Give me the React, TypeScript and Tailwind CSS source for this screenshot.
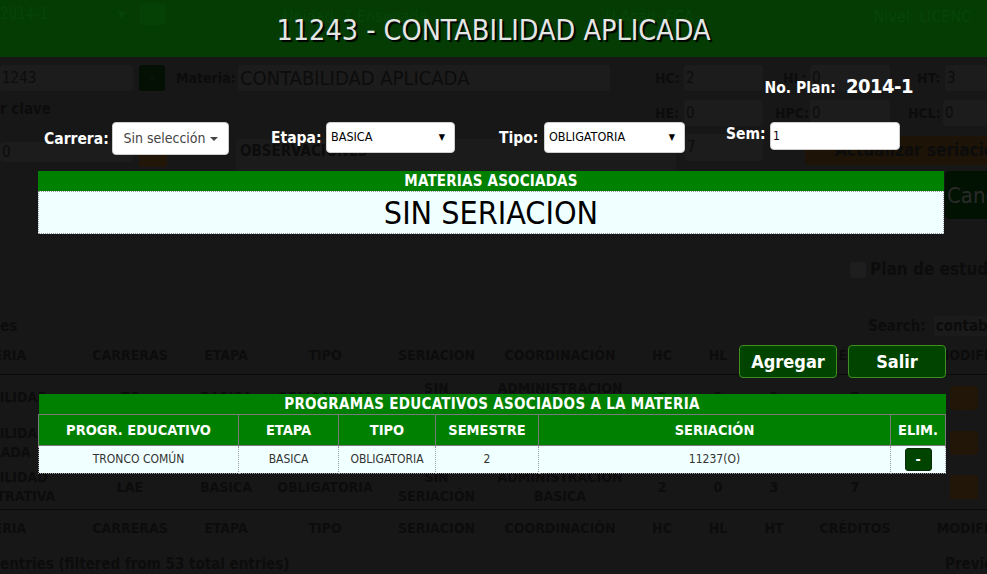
import React from "react";

const FONT =
  "font-['DejaVu_Sans_Condensed','DejaVu_Sans',sans-serif] [font-stretch:condensed]";

const G = "text-[#0c0c0c]"; // ghost text colour

function GInput({ className = "", children }: { className?: string; children?: React.ReactNode }) {
  return (
    <div className={`flex items-center overflow-hidden whitespace-nowrap rounded-[3px] bg-[#1c1c1c] pl-[2px] text-[15px] ${G} ${className}`}>
      {children}
    </div>
  );
}

const cols = [140, 130, 62, 136, 87, 160, 44, 68, 44, 118, 126];

function GRow({ cells, h, line = false, pb = 0 }: { cells: React.ReactNode[]; h: number; line?: boolean; pb?: number }) {
  return (
    <div
      className={`flex font-bold ${line ? "border-b border-[#0a0a0a]" : ""}`}
      style={{ height: h, paddingBottom: pb }}
    >
      {cells.map((c, i) => (
        <div
          key={i}
          className="flex shrink-0 items-center justify-center text-center text-[14px] leading-[19px]"
          style={{ width: cols[i] }}
        >
          {c}
        </div>
      ))}
    </div>
  );
}

function Edit() {
  return <div className="h-[24px] w-[28px] rounded-[3px] bg-[#211607]" />;
}

function Background() {
  const head = ["MATERIA", "CARRERAS", "ETAPA", "TIPO", "SERIACION", "COORDINACIÓN", "HC", "HL", "HT", "CRÉDITOS", "MODIFICAR"];
  const edit = <div className="flex w-full justify-start pl-[36px]"><Edit /></div>;
  return (
    <div className={`flex h-[574px] w-[987px] flex-col bg-[#171717] ${G}`}>
      {/* header band */}
      <div className="flex h-[57px] shrink-0 items-start whitespace-nowrap bg-[#043c04] pt-[3px] text-[15px] text-[#074507]">
        <div className="flex h-[22px] w-[133px] items-center justify-between pr-[8px]">
          <span>2014-1</span>
          <span className="text-[10px]">▼</span>
        </div>
        <div className="ml-[7px] h-[22px] w-[26px] rounded-[3px] bg-[#054105]" />
        <div className="ml-[117px] pt-[2px] text-[16px]">Unidad: 1 Ensenada</div>
        <div className="ml-[178px] pt-[2px] text-[16px]">U.Acad: FCA</div>
        <div className="ml-[180px] pt-[2px] text-[16px]">Nivel: LICENC</div>
      </div>

      {/* row 1 */}
      <div className="mt-[8px] flex h-[26px] items-stretch whitespace-nowrap">
        <GInput className="w-[133px]">1243</GInput>
        <div className="ml-[6px] flex w-[26px] items-center justify-center rounded-[3px] bg-[#031003] text-[#0c1a0c]">-</div>
        <div className="ml-[11px] flex w-[56px] items-center text-[14px] font-bold">Materia:</div>
        <GInput className="ml-[6px] w-[372px] text-[20px]">CONTABILIDAD APLICADA</GInput>
        <div className="ml-[45px] flex w-[29px] items-center text-[14px] font-bold">HC:</div>
        <GInput className="w-[79px]">2</GInput>
        <div className="ml-[20px] flex w-[27px] items-center text-[14px] font-bold">HL:</div>
        <GInput className="w-[80px]">0</GInput>
        <div className="ml-[27px] flex w-[28px] items-center text-[14px] font-bold">HT:</div>
        <GInput className="w-[42px]">3</GInput>
      </div>

      {/* row 2 */}
      <div className="mt-[9px] flex h-[26px] items-stretch whitespace-nowrap">
        <div className="w-[655px] text-[15px] font-bold leading-[18px]">r clave</div>
        <div className="flex w-[29px] items-center text-[14px] font-bold">HE:</div>
        <GInput className="w-[79px]">0</GInput>
        <div className="ml-[12px] flex w-[35px] items-center text-[14px] font-bold">HPC:</div>
        <GInput className="w-[80px]">0</GInput>
        <div className="ml-[18px] flex w-[35px] items-center text-[14px] font-bold">HCL:</div>
        <GInput className="w-[44px]">0</GInput>
      </div>

      {/* row 3 */}
      <div className="mt-[8px] flex h-[33px] items-start whitespace-nowrap">
        <GInput className="mt-[8px] h-[20px] w-[133px]">0</GInput>
        <div className="ml-[6px] mt-[5px] h-[28px] w-[28px] rounded-[3px] bg-[#211607]" />
        <div className="ml-[69px] mt-[5px] h-[40px] w-[440px] rounded-[3px] bg-[#1b1b1b] pl-[4px] pt-[1px] text-[15px] font-bold">
          OBSERVACIONES
        </div>
        <GInput className="ml-[9px] h-[27px] w-[78px]">7</GInput>
        <div className="ml-[42px] mt-[2px] flex h-[29px] flex-1 items-center overflow-hidden rounded-l-[4px] bg-[#1d1307] pl-[30px] text-[17px] font-bold">
          Actualizar seriación
        </div>
      </div>

      {/* row 4 – cancel */}
      <div className="mt-[4px] flex h-[48px] justify-end">
        <div className="flex w-[42px] items-center overflow-hidden whitespace-nowrap rounded-l-[4px] bg-[#021202] pl-[2px] text-[22px] text-[#2a2a2a]">
          Cancelar
        </div>
      </div>

      {/* checkbox row */}
      <div className="mt-[42px] flex h-[18px] items-center whitespace-nowrap pl-[850px]">
        <div className="h-[16px] w-[16px] shrink-0 rounded-[2px] bg-[#1e1e1e]" />
        <div className="ml-[4px] text-[17px] font-bold">Plan de estudios</div>
      </div>

      {/* search row */}
      <div className="mt-[36px] flex h-[22px] items-center whitespace-nowrap">
        <div className="w-[868px] text-[15px] font-bold">es</div>
        <div className="text-[15px] font-bold">Search:</div>
        <div className="ml-[8px] flex h-[20px] flex-1 items-center overflow-hidden bg-[#1b1b1b] pl-[2px] text-[15px] font-bold">
          contabilidad
        </div>
      </div>

      {/* ghost table */}
      <div className="-ml-[75px] mt-[4px] flex flex-col">
        <GRow h={34} pb={4} line cells={head} />
        <GRow
          h={45}
          cells={["CONTABILIDAD", "TC", "BASICA", "OBLIGATORIA", <span>SIN<br />SERIACIÓN</span>, <span>ADMINISTRACION<br />BASICA</span>, "2", "0", "3", "7", edit]}
        />
        <GRow
          h={45}
          cells={[<span>CONTABILIDAD<br />APLICADA</span>, "TC", "BASICA", "OBLIGATORIA", <span>SIN<br />SERIACIÓN</span>, <span>ADMINISTRACION<br />BASICA</span>, "2", "0", "3", "7", edit]}
        />
        <GRow
          h={45}
          line
          cells={[<span>CONTABILIDAD<br />ADMINISTRATIVA</span>, "LAE", "BASICA", "OBLIGATORIA", <span>SIN<br />SERIACIÓN</span>, <span>ADMINISTRACION<br />BASICA</span>, "2", "0", "3", "7", edit]}
        />
        <GRow h={36} cells={head} />
      </div>
      <div className="mt-[8px] flex h-[20px] items-center justify-between whitespace-nowrap text-[15px] font-bold">
        <span>entries (filtered from 53 total entries)</span>
        <span className="w-[42px] overflow-hidden">Previous</span>
      </div>
    </div>
  );
}

function Select({ w, h, label }: { w: number; h: number; label: string }) {
  return (
    <div
      className="flex shrink-0 items-center justify-between rounded-[4px] border border-[#cfcfcf] bg-white pl-[4px] pr-[9px] text-[12.5px] font-normal text-black"
      style={{ width: w, height: h }}
    >
      <span>{label}</span>
      <span className="text-[9px]">▼</span>
    </div>
  );
}

function Modal() {
  const th = "border border-[#7a7a7a] p-0 text-center text-[14.5px] font-bold leading-[16px] text-white";
  const td = "border border-dotted border-[#9a9a9a] p-0 text-center text-[12px] leading-[16px] text-[#333]";
  return (
    <div className="absolute inset-0 flex flex-col">
      {/* title */}
      <div className="flex h-[57px] items-center justify-center pt-[5px] text-[28.5px] leading-[34px] text-[#e6e6e6] [text-shadow:2px_2px_1px_#000]">
        11243 - CONTABILIDAD APLICADA
      </div>

      {/* plan */}
      <div className="mt-[14px] flex h-[24px] items-baseline justify-end whitespace-nowrap pr-[74px] font-bold text-white">
        <span className="text-[15.5px]">No. Plan:</span>
        <span className="ml-[10px] text-[20px] tracking-[-0.5px]">2014-1</span>
      </div>

      {/* form row */}
      <div className="mt-[27px] flex h-[33px] items-start whitespace-nowrap pl-[44px] text-[15.5px] font-bold text-white">
        <span className="mt-[6px] w-[63px] shrink-0">Carrera:</span>
        <div className="ml-[5px] flex h-[33px] w-[117px] shrink-0 items-center justify-center rounded-[4px] border border-[#ccc] bg-white text-[14px] font-normal text-[#444]">
          Sin selección
          <span className="ml-[4px] mt-[1px] inline-block h-0 w-0 border-x-[4px] border-t-[4px] border-x-transparent border-t-[#444]" />
        </div>
        <span className="ml-[42px] mt-[5px] w-[49px] shrink-0">Etapa:</span>
        <div className="ml-[6px]">
          <Select w={129} h={31} label="BASICA" />
        </div>
        <span className="ml-[44px] mt-[5px] w-[39px] shrink-0">Tipo:</span>
        <div className="ml-[6px]">
          <Select w={141} h={31} label="OBLIGATORIA" />
        </div>
        <span className="ml-[41px] mt-[1px] w-[37px] shrink-0">Sem:</span>
        <div className="ml-[7px] flex h-[28px] w-[130px] shrink-0 items-center rounded-[4px] border border-[#ccc] bg-white pl-[2px] text-[12px] font-normal text-black">
          1
        </div>
      </div>

      {/* materias asociadas */}
      <div className="ml-[38px] mt-[16px] w-[906px]">
        <div className="flex h-[20px] items-center justify-center bg-[#008000] text-[15px] font-bold tracking-[0.2px] text-white">
          MATERIAS ASOCIADAS
        </div>
        <div className="flex h-[43px] items-center justify-center border border-dotted border-[#9a9a9a] bg-[#f0ffff] text-[32px] leading-[40px] text-black">
          SIN SERIACION
        </div>
      </div>

      {/* buttons */}
      <div className="mt-[111px] flex h-[33px] justify-end gap-[11px] pr-[41px]">
        <button className="flex h-[33px] w-[98px] items-center justify-center rounded-[4px] border border-[#3f8f1f] bg-[#004400] text-[18px] font-bold text-white">
          Agregar
        </button>
        <button className="flex h-[33px] w-[98px] items-center justify-center rounded-[4px] border border-[#3f8f1f] bg-[#004400] text-[18px] font-bold text-white">
          Salir
        </button>
      </div>

      {/* programas educativos */}
      <div className="ml-[38px] mt-[16px] w-[907px]">
        <table className="w-[907px] table-fixed border-collapse">
          <colgroup>
            <col style={{ width: 200 }} />
            <col style={{ width: 100 }} />
            <col style={{ width: 97 }} />
            <col style={{ width: 103 }} />
            <col style={{ width: 352 }} />
            <col style={{ width: 55 }} />
          </colgroup>
          <thead>
            <tr className="h-[20px] bg-[#008000]">
              <th colSpan={6} className="p-0 text-center text-[15px] font-bold leading-[16px] tracking-[0.3px] text-white">
                PROGRAMAS EDUCATIVOS ASOCIADOS A LA MATERIA
              </th>
            </tr>
            <tr className="h-[31px] bg-[#008000]">
              <th className={th}>PROGR. EDUCATIVO</th>
              <th className={th}>ETAPA</th>
              <th className={th}>TIPO</th>
              <th className={th}>SEMESTRE</th>
              <th className={th}>SERIACIÓN</th>
              <th className={th}>ELIM.</th>
            </tr>
          </thead>
          <tbody>
            <tr className="h-[28px] bg-[#f0ffff]">
              <td className={td}>TRONCO COMÚN</td>
              <td className={td}>BASICA</td>
              <td className={td}>OBLIGATORIA</td>
              <td className={td}>2</td>
              <td className={td}>11237(O)</td>
              <td className={td}>
                <div className="mx-auto flex h-[23px] w-[27px] items-center justify-center rounded-[3px] border border-[#0a2a0a] bg-[#004400] text-[14px] font-bold leading-none text-white">
                  -
                </div>
              </td>
            </tr>
          </tbody>
        </table>
      </div>
    </div>
  );
}

export default function App() {
  return (
    <div className={`relative h-[574px] w-[987px] overflow-hidden ${FONT}`}>
      <Background />
      <Modal />
    </div>
  );
}
